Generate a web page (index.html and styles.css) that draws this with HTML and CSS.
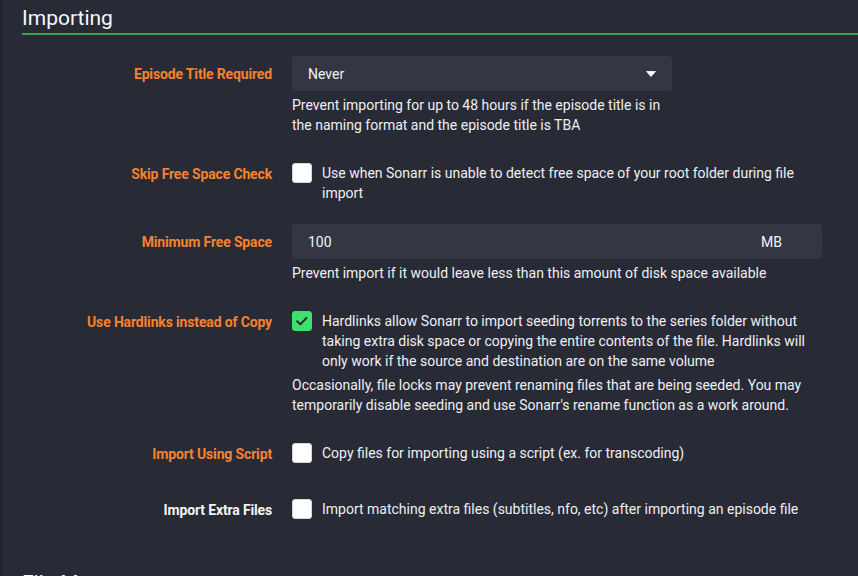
FILE: index.html
```html
<!DOCTYPE html>
<html>
<head>
<meta charset="utf-8">
<link rel="stylesheet" href="styles.css">
</head>
<body>
<div class="page">
  <section class="fieldset">
    <h2 class="legend">Importing</h2>

    <div class="form-group">
      <label class="label advanced">Episode Title Required</label>
      <div class="input-col small">
        <div class="select">
          <span>Never</span>
          <svg class="caret" width="10" height="6" viewBox="0 0 10 6"><path d="M0.5 0.5 H9.5 L5 5.5 Z" fill="#fff" stroke="#fff" stroke-width="0.8" stroke-linejoin="round"/></svg>
        </div>
        <div class="help">Prevent importing for up to 48 hours if the episode title is in the naming format and the episode title is TBA</div>
      </div>
    </div>

    <div class="form-group">
      <label class="label advanced">Skip Free Space Check</label>
      <div class="input-col">
        <div class="check-row">
          <span class="checkbox"></span>
          <span class="check-text">Use when Sonarr is unable to detect free space of your root folder during file import</span>
        </div>
      </div>
    </div>

    <div class="form-group">
      <label class="label advanced">Minimum Free Space</label>
      <div class="input-col">
        <div class="text-input">
          <span>100</span>
          <span class="unit">MB</span>
        </div>
        <div class="help">Prevent import if it would leave less than this amount of disk space available</div>
      </div>
    </div>

    <div class="form-group">
      <label class="label advanced">Use Hardlinks instead of Copy</label>
      <div class="input-col">
        <div class="check-row">
          <span class="checkbox checked"><svg width="20" height="20" viewBox="0 0 20 20"><path d="M5.2 10.2 L8.4 13.2 L14.6 6.9" fill="none" stroke="#282a36" stroke-width="2" stroke-linecap="round" stroke-linejoin="round"/></svg></span>
          <span class="check-text">Hardlinks allow Sonarr to import seeding torrents to the series folder without taking extra disk space or copying the entire contents of the file. Hardlinks will only work if the source and destination are on the same volume</span>
        </div>
        <div class="help">Occasionally, file locks may prevent renaming files that are being seeded. You may temporarily disable seeding and use Sonarr's rename function as a work around.</div>
      </div>
    </div>

    <div class="form-group">
      <label class="label advanced">Import Using Script</label>
      <div class="input-col">
        <div class="check-row">
          <span class="checkbox"></span>
          <span class="check-text">Copy files for importing using a script (ex. for transcoding)</span>
        </div>
      </div>
    </div>

    <div class="form-group">
      <label class="label">Import Extra Files</label>
      <div class="input-col">
        <div class="check-row">
          <span class="checkbox"></span>
          <span class="check-text">Import matching extra files (subtitles, nfo, etc) after importing an episode file</span>
        </div>
      </div>
    </div>
  </section>

  <section class="fieldset next">
    <h2 class="legend">File Management</h2>
  </section>
</div>
</body>
</html>
```

FILE: styles.css
```css
html, body {
  margin: 0;
  padding: 0;
  background: #282a36;
  height: 100%;
  overflow: hidden;
}

body {
  font-family: Roboto, "Liberation Sans", sans-serif;
  font-size: 14px;
  line-height: 20px;
  color: #eef0f2;
  border-left: 2px solid #20212b;
}

.page {
  padding: 3px 0 0 20px;
}

.legend {
  margin: 0 0 21px 0;
  font-size: 21px;
  font-weight: 400;
  line-height: 30px;
  color: #f8f8f8;
  border-bottom: 2px solid #3ba34c;
}

.form-group {
  display: flex;
  align-items: flex-start;
  margin-bottom: 21px;
}

.label {
  flex: 0 0 250px;
  margin-right: 20px;
  padding-top: 2px;
  text-align: right;
  font-weight: 700;
  line-height: 33px;
  letter-spacing: -0.15px;
  color: #f4f4f6;
}

.label.advanced {
  color: #f7822e;
}

.input-col {
  flex: 0 0 530px;
  width: 530px;
}

.input-col.small {
  flex: 0 0 380px;
  width: 380px;
}

.select,
.text-input {
  position: relative;
  height: 35px;
  box-sizing: border-box;
  padding: 0 16px;
  display: flex;
  align-items: center;
  background: #343643;
  border-radius: 4px;
  color: #f4f4f6;
}

.caret {
  position: absolute;
  right: 16px;
  top: 15px;
}

.unit {
  position: absolute;
  right: 40px;
  top: 8px;
}

.help {
  margin-top: 4px;
  line-height: 20px;
}

.check-row {
  display: flex;
  align-items: flex-start;
  padding-top: 7px;
}

.checkbox {
  flex: 0 0 20px;
  width: 20px;
  height: 20px;
  margin-right: 10px;
  background: #ffffff;
  border-radius: 3px;
  box-sizing: border-box;
  border: 1px solid #d8d8dc;
}

.checkbox.checked {
  background: #3de26c;
  border-color: #3de26c;
  position: relative;
}

.checkbox.checked svg {
  position: absolute;
  left: -1px;
  top: -1px;
}

.check-text {
  flex: 1 1 auto;
  line-height: 20px;
}

.fieldset.next {
  margin-top: 41px;
}
```
